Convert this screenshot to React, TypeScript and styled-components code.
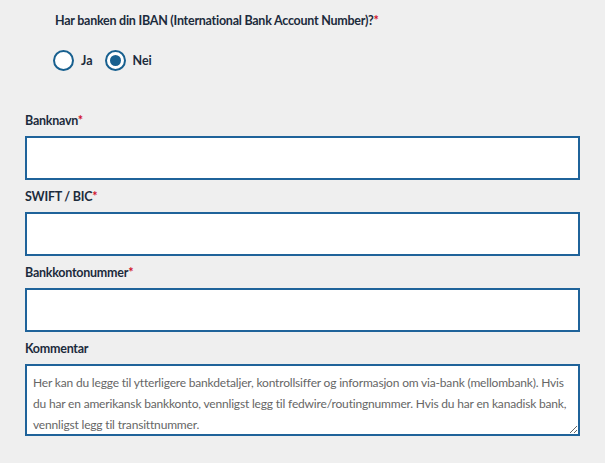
import React from 'react';
import styled, { createGlobalStyle } from 'styled-components';

const GlobalStyle = createGlobalStyle`
  html, body {
    margin: 0;
    background: #efefef;
  }

  body {
    font-family: Lato, "Liberation Sans", sans-serif;
  }
`;

const Page = styled.div`
  padding: 12px 25px 0 25px;
  width: 555px;
`;

const QuestionBlock = styled.fieldset`
  border: none;
  margin: 0 0 41px 0;
  padding: 0 0 0 28px;
`;

const Label = styled.label`
  display: block;
  font-size: 12.5px;
  line-height: 18px;
  font-weight: 700;
  letter-spacing: -0.25px;
  color: #1c2b3c;
  margin-bottom: 6px;
`;

const Question = styled(Label)`
  margin-bottom: 19px;
`;

const Required = styled.span`
  color: #d0112b;
`;

const RadioRow = styled.div`
  display: flex;
  align-items: center;
  gap: 12px;
  height: 22px;
`;

const RadioOption = styled.label`
  display: flex;
  align-items: center;
  gap: 7px;
  font-size: 12.5px;
  font-weight: 700;
  color: #1c2b3c;
  cursor: pointer;
`;

const RadioCircle = styled.span<{ $checked?: boolean }>`
  width: 21px;
  height: 21px;
  box-sizing: border-box;
  border-radius: 50%;
  border: 2px solid #18608f;
  background: #fff;
  display: flex;
  align-items: center;
  justify-content: center;

  &::after {
    content: '';
    width: 11px;
    height: 11px;
    border-radius: 50%;
    background: ${({ $checked }) => ($checked ? '#18608f' : 'transparent')};
  }
`;

const Field = styled.div`
  margin-bottom: 8px;
`;

const TextInput = styled.input`
  display: block;
  width: 100%;
  height: 44px;
  box-sizing: border-box;
  border: 2px solid #1f639a;
  background: #fff;
  outline: none;
  margin: 0;
  padding: 0 8px;
  font-family: inherit;
  font-size: 13px;
`;

const TextArea = styled.textarea`
  display: block;
  width: 100%;
  height: 72px;
  box-sizing: border-box;
  border: 2px solid #1f639a;
  background: #fff;
  outline: none;
  margin: 0;
  padding: 6px 6px;
  font-family: inherit;
  font-size: 12px;
  letter-spacing: -0.18px;
  line-height: 21px;
  resize: vertical;

  &::placeholder {
    color: #666;
  }
`;

const fields = [
  { id: 'bankName', label: 'Banknavn', required: true },
  { id: 'swift', label: 'SWIFT / BIC', required: true },
  { id: 'account', label: 'Bankkontonummer', required: true },
];

function App() {
  return (
    <>
      <GlobalStyle />
      <Page>
        <QuestionBlock>
          <Question as="legend">
            Har banken din IBAN (International Bank Account Number)?
            <Required>*</Required>
          </Question>
          <RadioRow>
            <RadioOption>
              <RadioCircle />
              Ja
            </RadioOption>
            <RadioOption>
              <RadioCircle $checked />
              Nei
            </RadioOption>
          </RadioRow>
        </QuestionBlock>

        {fields.map((field) => (
          <Field key={field.id}>
            <Label htmlFor={field.id}>
              {field.label}
              {field.required && <Required>*</Required>}
            </Label>
            <TextInput id={field.id} type="text" />
          </Field>
        ))}

        <Field>
          <Label htmlFor="comment">Kommentar</Label>
          <TextArea
            id="comment"
            placeholder="Her kan du legge til ytterligere bankdetaljer, kontrollsiffer og informasjon om via-bank (mellombank). Hvis du har en amerikansk bankkonto, vennligst legg til fedwire/routingnummer. Hvis du har en kanadisk bank, vennligst legg til transittnummer."
          />
        </Field>
      </Page>
    </>
  );
}

export default App;
